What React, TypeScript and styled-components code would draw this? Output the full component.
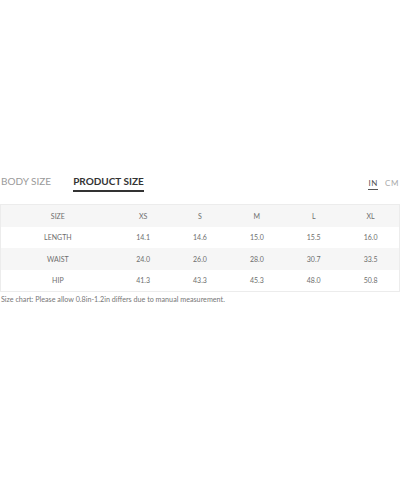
import React from "react";
import styled, { createGlobalStyle } from "styled-components";

const Global = createGlobalStyle`
  html, body { margin: 0; padding: 0; background: #fff; }
  body { font-family: Lato, "Open Sans", sans-serif; }
`;

const Page = styled.div`
  width: 400px;
  height: 480px;
  padding-top: 175px;
  box-sizing: border-box;
`;

const TabBar = styled.div`
  display: flex;
  align-items: flex-start;
  justify-content: space-between;
  height: 29px;
`;

const Tabs = styled.div`
  display: flex;
  gap: 22px;
  padding-left: 1px;
`;

const Tab = styled.div<{ $active?: boolean }>`
  font-size: 10px;
  line-height: 12px;
  letter-spacing: 0;
  font-weight: ${(p) => (p.$active ? 700 : 400)};
  color: ${(p) => (p.$active ? "#333" : "#9a9a9a")};
  padding-bottom: 3px;
  border-bottom: 2px solid ${(p) => (p.$active ? "#333" : "transparent")};
`;

const Units = styled.div`
  display: flex;
  gap: 7px;
  padding-top: 3px;
  padding-right: 1px;
`;

const Unit = styled.div<{ $active?: boolean }>`
  font-size: 8px;
  line-height: 10px;
  letter-spacing: 0.6px;
  color: ${(p) => (p.$active ? "#555" : "#aaa")};
  padding-bottom: 1px;
  border-bottom: 1px solid ${(p) => (p.$active ? "#555" : "transparent")};
`;

const Table = styled.div`
  width: 398px;
  border: 1px solid #ececec;
  display: grid;
  grid-template-columns: 2fr repeat(5, 1fr);
`;

const Cell = styled.div<{ $shaded?: boolean }>`
  height: 21.5px;
  display: flex;
  align-items: center;
  justify-content: center;
  font-size: 7px;
  color: #6e6e6e;
  background: ${(p) => (p.$shaded ? "#f6f6f6" : "#fff")};
`;

const Note = styled.div`
  font-size: 7.2px;
  color: #777;
  padding: 3px 0 0 1px;
`;

const rows = [
  ["SIZE", "XS", "S", "M", "L", "XL"],
  ["LENGTH", "14.1", "14.6", "15.0", "15.5", "16.0"],
  ["WAIST", "24.0", "26.0", "28.0", "30.7", "33.5"],
  ["HIP", "41.3", "43.3", "45.3", "48.0", "50.8"],
];

export default function App() {
  return (
    <Page>
      <Global />
      <TabBar>
        <Tabs>
          <Tab>BODY SIZE</Tab>
          <Tab $active>PRODUCT SIZE</Tab>
        </Tabs>
        <Units>
          <Unit $active>IN</Unit>
          <Unit>CM</Unit>
        </Units>
      </TabBar>
      <Table>
        {rows.map((r, i) =>
          r.map((c, j) => (
            <Cell key={`${i}-${j}`} $shaded={i % 2 === 0}>
              {c}
            </Cell>
          ))
        )}
      </Table>
      <Note>Size chart: Please allow 0.8in-1.2in differs due to manual measurement.</Note>
    </Page>
  );
}
